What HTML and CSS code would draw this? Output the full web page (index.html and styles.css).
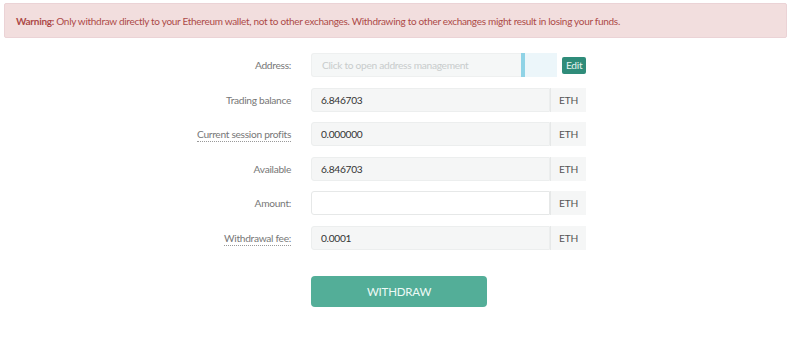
FILE: index.html
```html
<!DOCTYPE html>
<html>
<head>
<meta charset="utf-8">
<link rel="stylesheet" href="styles.css">
</head>
<body>
<div class="alert"><p class="alert-text"><strong>Warning:</strong> Only withdraw directly to your Ethereum wallet, not to other exchanges. Withdrawing to other exchanges might result in losing your funds.</p></div>
<form class="form">
  <div class="row">
    <label class="label">Address:</label>
    <div class="field">
      <div class="addr">
        <span class="addr-input">Click to open address management</span>
        <span class="addr-bar"></span>
        <span class="addr-tail"></span>
      </div>
      <span class="edit">Edit</span>
    </div>
  </div>
  <div class="row">
    <label class="label">Trading balance</label>
    <div class="group"><span class="input ro">6.846703</span><span class="addon">ETH</span></div>
  </div>
  <div class="row">
    <label class="label"><span class="dotted">Current session profits</span></label>
    <div class="group"><span class="input ro">0.000000</span><span class="addon">ETH</span></div>
  </div>
  <div class="row">
    <label class="label">Available</label>
    <div class="group"><span class="input ro">6.846703</span><span class="addon">ETH</span></div>
  </div>
  <div class="row">
    <label class="label">Amount:</label>
    <div class="group"><span class="input"></span><span class="addon">ETH</span></div>
  </div>
  <div class="row">
    <label class="label"><span class="dotted">Withdrawal fee:</span></label>
    <div class="group"><span class="input ro">0.0001</span><span class="addon">ETH</span></div>
  </div>
  <div class="row btn-row">
    <span></span>
    <button type="button" class="withdraw">WITHDRAW</button>
  </div>
</form>
</body>
</html>
```
FILE: styles.css
```css
html, body {
  margin: 0;
  padding: 0;
  background: #fff;
}
body {
  font-family: Lato, "Liberation Sans", sans-serif;
  font-size: 10.2px;
  letter-spacing: -0.3px;
  color: #555;
}
.alert {
  margin: 3px 3px 0 4px;
  height: 35px;
  box-sizing: border-box;
  display: flex;
  align-items: center;
  padding: 0 11px;
  background: #f2dede;
  border: 1px solid #ebd3d6;
  border-radius: 2px;
  color: #ad4a48;
  font-size: 10px;
}
.alert-text { margin: 0; }
.alert strong { font-weight: 700; }
.form {
  display: flex;
  flex-direction: column;
  gap: 10.6px;
  padding-top: 15px;
}
.row {
  display: grid;
  grid-template-columns: 291px 275px;
  column-gap: 20px;
  align-items: center;
}
.label {
  text-align: right;
  color: #777;
}
.dotted {
  border-bottom: 1px dotted #999;
  padding-bottom: 1px;
}
.field {
  display: flex;
  align-items: center;
  height: 24px;
}
.addr {
  display: flex;
  height: 24px;
  flex: 0 0 246px;
}
.addr-input {
  flex: 0 0 210px;
  box-sizing: border-box;
  background: #f5f7f7;
  border: 1px solid #eef0f0;
  border-right: none;
  border-radius: 3px 0 0 3px;
  color: #c8cccc;
  padding: 0 10px;
  display: flex;
  align-items: center;
}
.addr-bar {
  flex: 0 0 4px;
  background: #8fd3e6;
}
.addr-tail {
  flex: 1;
  background: #ecf6fa;
}
.edit {
  flex: 0 0 auto;
  margin-left: 5px;
  background: #2f8c7a;
  color: #e6f4f0;
  border-radius: 2px;
  height: 17px;
  padding: 0 4px;
  display: flex;
  align-items: center;
}
.group {
  display: flex;
  height: 24px;
}
.input {
  flex: 1;
  box-sizing: border-box;
  border: 1px solid #e6e8e8;
  border-radius: 3px 0 0 3px;
  background: #fff;
  color: #333;
  padding: 0 9px;
  display: flex;
  align-items: center;
}
.input.ro {
  background: #f5f6f6;
  border-color: #eceeee;
}
.addon {
  flex: 0 0 36px;
  box-sizing: border-box;
  background: #f5f6f6;
  border-left: 1px solid #e6e8e8;
  color: #555;
  display: flex;
  align-items: center;
  justify-content: center;
}
.btn-row { margin-top: 15px; }
.withdraw {
  width: 176px;
  height: 31px;
  border: none;
  border-radius: 4px;
  background: #53ae98;
  color: #eefaf6;
  font-family: inherit;
  font-size: 11.5px;
  letter-spacing: -0.2px;
  padding: 0;
}
```
